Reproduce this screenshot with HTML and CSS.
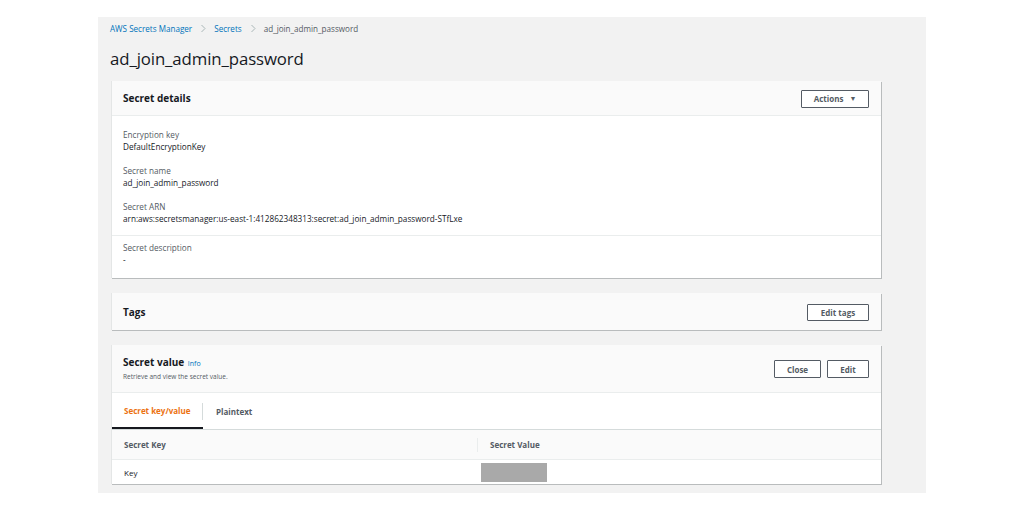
FILE: index.html
```html
<!DOCTYPE html>
<html>
<head>
<meta charset="utf-8">
<link rel="stylesheet" href="styles.css">
</head>
<body>
<div class="panel">
  <nav class="crumbs">
    <a class="crumb-link">AWS Secrets Manager</a>
    <span class="chev"><svg width="7" height="9" viewBox="0 0 7 9"><path d="M1.5 1 L5 4.5 L1.5 8" fill="none" stroke="#aab7b8" stroke-width="1"/></svg></span>
    <a class="crumb-link">Secrets</a>
    <span class="chev"><svg width="7" height="9" viewBox="0 0 7 9"><path d="M1.5 1 L5 4.5 L1.5 8" fill="none" stroke="#aab7b8" stroke-width="1"/></svg></span>
    <span class="crumb-current">ad_join_admin_password</span>
  </nav>
  <h1 class="title">ad_join_admin_password</h1>

  <section class="card details">
    <div class="card-head">
      <h2 class="card-title">Secret details</h2>
      <button class="btn btn-actions">Actions <span class="caret">&#9660;</span></button>
    </div>
    <div class="details-main">
      <div class="kv"><div class="k">Encryption key</div><div class="v">DefaultEncryptionKey</div></div>
      <div class="kv"><div class="k">Secret name</div><div class="v">ad_join_admin_password</div></div>
      <div class="kv"><div class="k">Secret ARN</div><div class="v">arn:aws:secretsmanager:us-east-1:412862348313:secret:ad_join_admin_password-STfLxe</div></div>
    </div>
    <div class="details-desc">
      <div class="kv"><div class="k">Secret description</div><div class="v">-</div></div>
    </div>
  </section>

  <section class="card tags">
    <div class="card-head tags-head">
      <h2 class="card-title">Tags</h2>
      <button class="btn btn-edittags">Edit tags</button>
    </div>
  </section>

  <section class="card secret">
    <div class="card-head secret-head">
      <div class="secret-titles">
        <h2 class="card-title">Secret value <span class="info">Info</span></h2>
        <div class="subtitle">Retrieve and view the secret value.</div>
      </div>
      <div class="btn-group">
        <button class="btn btn-close">Close</button>
        <button class="btn btn-edit">Edit</button>
      </div>
    </div>
    <div class="tabs">
      <div class="tab tab-active">Secret key/value</div>
      <div class="tab">Plaintext</div>
    </div>
    <div class="table">
      <div class="trow thead">
        <div class="cell c1">Secret Key</div>
        <div class="cell c2">Secret Value</div>
      </div>
      <div class="trow tbody">
        <div class="cell c1">Key</div>
        <div class="cell c2"><div class="masked"></div></div>
      </div>
    </div>
  </section>
</div>
</body>
</html>
```

FILE: styles.css
```css
* { box-sizing: border-box; }
html, body { margin: 0; padding: 0; background: #ffffff; }
body {
  font-family: "Open Sans", "Noto Sans", "Liberation Sans", sans-serif;
  color: #16191f;
  padding: 17px 0 0 98px;
}
.panel {
  width: 828px;
  height: 476px;
  background: #f2f2f2;
  padding: 0 45px 0 13px;
}
.crumbs {
  display: flex;
  align-items: center;
  height: 22px;
  padding-top: 0;
  font-size: 8.1px;
  margin-left: -1px;
}
.crumb-link { color: #0073bb; }
.crumb-current { color: #545b64; }
.chev { display: inline-flex; margin: 0 7px 0 8px; }
.title {
  margin: 0;
  font-weight: 400;
  font-size: 16.8px;
  line-height: 24px;
  height: 42px;
  padding-top: 8px;
  margin-left: -1px;
  color: #16191f;
  letter-spacing: -0.1px;
}
.card {
  background: #ffffff;
  border-left: 1px solid #e4e6e6;
  box-shadow: 1px 1px 0 0 #b9bcbd;
}
.card-head {
  background: #fafafa;
  display: flex;
  align-items: center;
  justify-content: space-between;
  height: 35px;
  padding: 0 12px 0 11px;
  border-bottom: 1px solid #eaeded;
}
.card-title {
  margin: 0;
  font-size: 10px;
  font-weight: 700;
  color: #16191f;
}
.btn {
  font-family: inherit;
  font-size: 8px;
  font-weight: 700;
  color: #545b64;
  background: #ffffff;
  border: 1px solid #545b64;
  border-radius: 1px;
  padding: 0;
  height: 18px;
  display: inline-flex;
  align-items: center;
  justify-content: center;
}
.btn-actions { width: 68px; margin-top: 1px; }
.caret { font-size: 7px; margin-left: 6px; color: #545b64; }
.details-main {
  padding: 13px 12px 10px 11px;
  border-bottom: 1px solid #eaeded;
}
.details-main .kv + .kv { margin-top: 12px; }
.details-desc { padding: 6px 12px 12px 11px; }
.k { font-size: 8.2px; line-height: 12px; color: #545b64; }
.v { font-size: 8.2px; line-height: 12px; color: #16191f; }
.details { margin-bottom: 15px; }
.tags { margin-bottom: 15px; }
.tags-head { height: 37px; border-bottom: none; }
.btn-edittags { width: 62px; height: 17px; margin-top: 1px; }
.secret-head { height: 48px; align-items: flex-start; padding-top: 10px; }
.secret-titles { display: flex; flex-direction: column; }
.secret-head .card-title { line-height: 14px; }
.info { font-size: 7px; font-weight: 400; color: #0073bb; margin-left: 1px; }
.subtitle { font-size: 6.5px; color: #545b64; line-height: 10px; margin-top: 1px; }
.btn-group { display: flex; gap: 6px; margin-top: 5px; }
.btn-close { width: 47px; }
.btn-edit { width: 42px; }
.tabs {
  display: flex;
  height: 36px;
  background: #ffffff;
}
.tab {
  display: flex;
  align-items: center;
  font-size: 8px;
  font-weight: 700;
  color: #545b64;
  padding: 0 0 0 12px;
  position: relative;
}
.tab-active {
  color: #ec7211;
  width: 91px;
  border-bottom: 2px solid #16191f;
}
.tab-active::after {
  content: "";
  position: absolute;
  right: 0;
  top: 10px;
  height: 17px;
  border-right: 1px solid #d5dbdb;
}
.tab + .tab { padding-left: 13px; }
.table { border-top: 1px solid #d5dbdb; }
.trow { display: flex; }
.thead {
  background: #fafafa;
  height: 30px;
  align-items: center;
  border-bottom: 1px solid #eaeded;
}
.tbody { height: 24px; align-items: center; }
.cell { font-size: 8px; }
.thead .cell { font-weight: 700; color: #545b64; }
.c1 { width: 365px; padding-left: 12px; }
.c2 { padding-left: 12px; }
.thead .c2 { border-left: 1px solid #eaeded; height: 14px; display: flex; align-items: center; }
.tbody .c2 { padding-left: 4px; }
.masked { width: 66px; height: 19px; background: #a9a9a9; }
```
